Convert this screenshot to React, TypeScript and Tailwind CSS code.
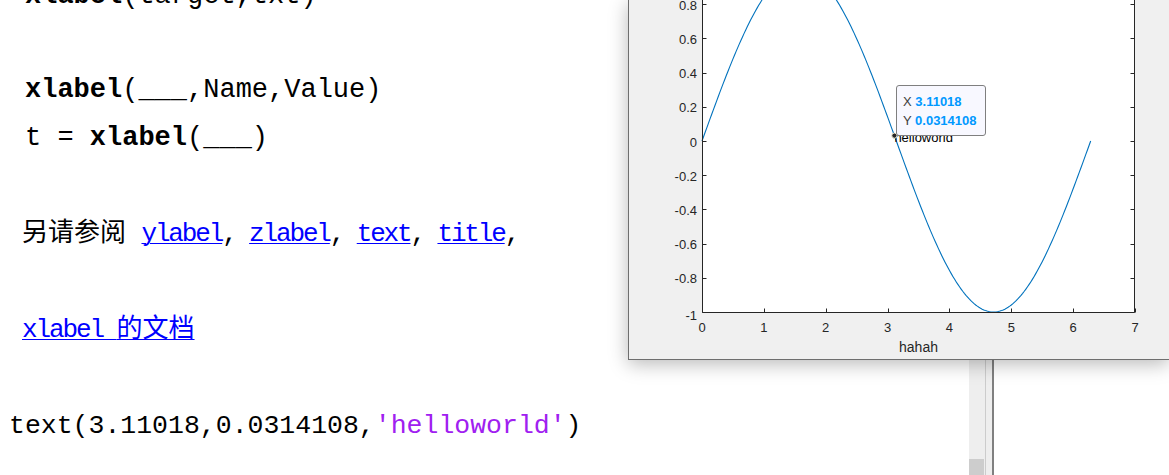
import React from 'react'

const Y_TICKS = ['-1', '-0.8', '-0.6', '-0.4', '-0.2', '0', '0.2', '0.4', '0.6', '0.8', '1']
const X_TICKS = [0, 1, 2, 3, 4, 5, 6, 7]

// axes mapping in page pixels
const X0 = 702
const Y0 = 141
const SX = 61.86
const SY = 171
const px = (v: number) => X0 + v * SX
const py = (v: number) => Y0 - v * SY

const AX_LEFT = 702.5
const AX_RIGHT = 1134.5
const AX_BOTTOM = 312.5
const AX_TOP = py(1)

function sinePath() {
  const n = 240
  const pts: string[] = []
  for (let i = 0; i <= n; i++) {
    const t = (i / n) * Math.PI * 2
    pts.push(`${i === 0 ? 'M' : 'L'}${px(t).toFixed(2)},${py(Math.sin(t)).toFixed(2)}`)
  }
  return pts.join(' ')
}

function Plot() {
  const mx = px(3.11018)
  const my = py(0.0314108)
  return (
    <svg
      className="absolute left-0 top-0 font-['Liberation_Sans',Arial,sans-serif]"
      width={540}
      height={359}
      viewBox="629 0 540 359"
    >
      <rect x={AX_LEFT} y={AX_TOP} width={AX_RIGHT - AX_LEFT} height={AX_BOTTOM - AX_TOP} fill="#ffffff" />
      <path d={sinePath()} fill="none" stroke="#0072BD" strokeWidth={1.1} />

      {/* axis box */}
      <path
        d={`M${AX_LEFT},${AX_TOP} L${AX_LEFT},${AX_BOTTOM} L${AX_RIGHT},${AX_BOTTOM} L${AX_RIGHT},${AX_TOP}`}
        fill="none"
        stroke="#262626"
        strokeWidth={1}
      />

      {Y_TICKS.map((l) => {
        const v = parseFloat(l)
        const y = Math.round(py(v)) + 0.5
        return (
          <g key={l}>
            <line x1={AX_LEFT} x2={AX_LEFT + 4} y1={y} y2={y} stroke="#262626" />
            <line x1={AX_RIGHT - 4} x2={AX_RIGHT} y1={y} y2={y} stroke="#262626" />
            <text
              x={697}
              y={v === -1 ? 315 : py(v) + 1}
              textAnchor="end"
              dominantBaseline="central"
              fontSize={13}
              fill="#262626"
            >
              {l}
            </text>
          </g>
        )
      })}

      {X_TICKS.map((v) => {
        const x = Math.round(px(v)) + 0.5
        return (
          <g key={v}>
            <line x1={x} x2={x} y1={AX_BOTTOM} y2={AX_BOTTOM - 4} stroke="#262626" />
            <text x={px(v)} y={327} textAnchor="middle" dominantBaseline="central" fontSize={13} fill="#262626">
              {v}
            </text>
          </g>
        )
      })}

      <text x={918.5} y={347} textAnchor="middle" dominantBaseline="central" fontSize={14} fill="#262626">
        hahah
      </text>

      <text x={mx} y={137.5} dominantBaseline="central" fontSize={13} fill="#000000">
        helloworld
      </text>
      <circle cx={mx} cy={my} r={2.6} fill="#262626" stroke="#f4f1d6" strokeWidth={1} />
    </svg>
  )
}

function FigureWindow() {
  return (
    <div className="absolute left-[628px] top-0 w-[541px] h-[360px] bg-[#f0f0f0] border-l border-b border-[#6e6e6e] shadow-[0_4px_18px_rgba(0,0,0,0.28)]">
      <Plot />
      <div className="absolute left-[267px] top-[85px] w-[90px] h-[51px] rounded-[3px] border border-[#7f7f7f] bg-[#f8f8ff] px-[6px] pt-[6px] font-['Liberation_Sans',Arial,sans-serif] text-[13px] leading-[19px] text-[#404040]">
        <div>
          X <span className="font-bold text-[#0099ff]">3.11018</span>
        </div>
        <div>
          Y <span className="font-bold text-[#0099ff]">0.0314108</span>
        </div>
      </div>
    </div>
  )
}

function Line({ children, className = '' }: { children?: React.ReactNode; className?: string }) {
  return <div className={`flex h-[48px] items-center whitespace-pre leading-none ${className}`}>{children}</div>
}

const link = 'text-[#0000ff] underline decoration-1 underline-offset-[2px]'

export default function App() {
  return (
    <div className="relative h-[475px] w-[1169px] overflow-hidden bg-white">
      <div className="flex h-full">
        <div className="w-[969px] overflow-hidden text-black font-['Liberation_Mono','Noto_Sans_CJK_SC',monospace]">
          <div className="-mt-[26px] flex flex-col">
            <div className="flex h-[44px] items-center whitespace-pre pl-[25px] text-[27px] leading-none">
              <span className="font-bold">xlabel</span>(target,txt)
            </div>
            <Line />
            <Line className="pl-[25px] text-[27px]">
              <span className="font-bold">xlabel</span>(___,Name,Value)
            </Line>
            <Line className="pl-[25px] text-[27px]">
              t = <span className="font-bold">xlabel</span>(___)
            </Line>
            <Line />
            <Line className="pl-[22px] text-[26px]">
              <span>另请参阅</span>
              <span className="pl-[2px] tracking-[-2.15px]">
                {' '}
                <a className={link}>ylabel</a>,{' '}
                <a className={link}>zlabel</a>,{' '}
                <a className={link}>text</a>,{' '}
                <a className={link}>title</a>,
              </span>
            </Line>
            <Line />
            <Line className="pl-[22px] text-[26px]">
              <a className={link}>
                <span className="tracking-[-2.1px]">xlabel </span>的文档
              </a>
            </Line>
            <Line />
            <Line className="pl-[9px] text-[26.5px]">
              text(3.11018,0.0314108,<span className="text-[#a020f0]">'helloworld'</span>)
            </Line>
          </div>
        </div>

        {/* vertical scrollbar of the help pane */}
        <div className="flex w-[16px] flex-col justify-end bg-[#eeeeee]">
          <div className="h-[16px] w-[15px] bg-[#cdcdcd]" />
        </div>
        <div className="w-px bg-[#cccccc]" />
        <div className="w-[6px] bg-[#eeeeee]" />
        <div className="w-[2px] bg-[#808080]" />
        <div className="flex-1 bg-white" />
      </div>

      <FigureWindow />
    </div>
  )
}
